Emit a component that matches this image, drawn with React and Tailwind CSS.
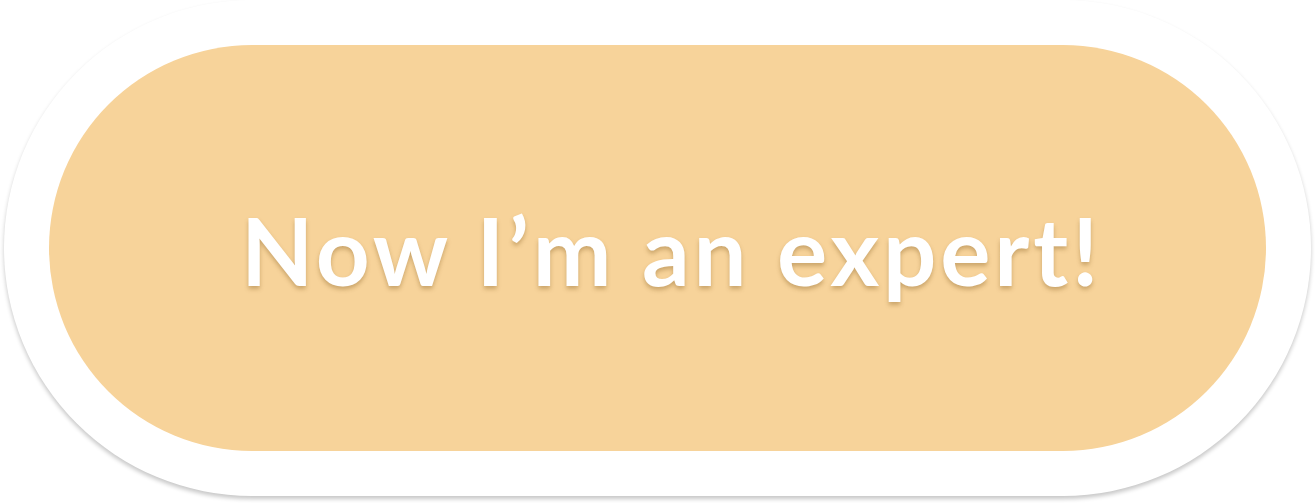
export default function App() {
  return (
    <div className="w-[1315px] h-[504px] bg-white overflow-hidden">
      <div className="ml-[4px] w-[1307px] h-[496px] rounded-full bg-white shadow-[0_3px_4px_rgba(0,0,0,0.22)] p-[45px]">
        <div className="h-full rounded-full bg-[#f7d39a] flex items-center justify-center">
          <span
            className="pl-[28px] pt-[4px] text-white font-bold text-[94px] leading-none tracking-[3.8px] [text-shadow:0_3px_4px_rgba(120,80,20,0.35)]"
            style={{ fontFamily: "Lato, 'Open Sans', sans-serif" }}
          >
            Now I’m an expert!
          </span>
        </div>
      </div>
    </div>
  );
}
